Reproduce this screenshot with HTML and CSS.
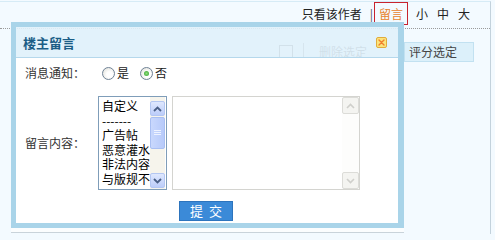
FILE: index.html
```html
<!DOCTYPE html>
<html>
<head>
<meta charset="utf-8">
<link rel="stylesheet" href="styles.css">
</head>
<body>
<div class="page">
  <div class="topbar">
    <span class="link">只看该作者</span>
    <span class="sep">|</span>
    <span class="msg">留言</span>
    <span class="size s1">小</span>
    <span class="size">中</span>
    <span class="size">大</span>
  </div>
  <div class="tools">
    <span class="ghost-check"></span>
    <span class="ghost-sep"></span>
    <span class="ghost-text">删除选定</span>
    <span class="rate">评分选定</span>
  </div>

  <div class="dialog-wrap">
    <div class="dialog">
      <div class="dlg-head">
        <span class="dlg-title">楼主留言</span>
        <svg class="dlg-close" width="11" height="11" viewBox="0 0 11 11">
          <rect x="0.5" y="0.5" width="10" height="10" rx="1.5" fill="#fbe47c" stroke="#e0ac3c"/>
          <path d="M3 3 L8 8 M8 3 L3 8" stroke="#f07f2c" stroke-width="1.4" stroke-linecap="round"/>
        </svg>
      </div>
      <div class="dlg-body">
        <div class="label row1">消息通知：</div>
        <div class="radios row1">
          <span class="radio"></span><span class="rlabel">是</span>
          <span class="radio checked second"></span><span class="rlabel">否</span>
        </div>

        <div class="label row2">留言内容：</div>
        <div class="fields row2">
          <div class="listbox">
            <div class="items">
              <div>自定义</div>
              <div>-------</div>
              <div>广告帖</div>
              <div>恶意灌水</div>
              <div>非法内容</div>
              <div>与版规不符</div>
            </div>
            <div class="sb">
              <div class="sb-btn up">
                <svg width="9" height="6" viewBox="0 0 9 6"><path d="M1 5 L4.5 1.5 L8 5" fill="none" stroke="#4a5f86" stroke-width="1.8"/></svg>
              </div>
              <div class="sb-thumb">
                <svg width="7" height="6" viewBox="0 0 7 6"><path d="M0 0.5H7M0 2.5H7M0 4.5H7" stroke="#eef3ff" stroke-width="1"/></svg>
              </div>
              <div class="sb-fill"></div>
              <div class="sb-btn down">
                <svg width="9" height="6" viewBox="0 0 9 6"><path d="M1 1 L4.5 4.5 L8 1" fill="none" stroke="#4a5f86" stroke-width="1.8"/></svg>
              </div>
            </div>
          </div>
          <div class="textarea">
            <div class="tsb">
              <div class="tsb-btn">
                <svg width="9" height="6" viewBox="0 0 9 6"><path d="M1 5 L4.5 1.5 L8 5" fill="none" stroke="#cfcfcb" stroke-width="1.6"/></svg>
              </div>
              <div class="tsb-fill"></div>
              <div class="tsb-btn">
                <svg width="9" height="6" viewBox="0 0 9 6"><path d="M1 1 L4.5 4.5 L8 1" fill="none" stroke="#cfcfcb" stroke-width="1.6"/></svg>
              </div>
            </div>
          </div>
        </div>

        <div class="row3 btnrow">
          <button class="submit"><span>提</span><span>交</span></button>
        </div>
      </div>
    </div>
  </div>
</div>
</body>
</html>
```

FILE: styles.css
```css
html, body {
  margin: 0;
  padding: 0;
  background: #f3faff;
}
body {
  width: 495px;
  height: 234px;
  overflow: hidden;
  font-family: "Noto Sans CJK SC", "DejaVu Sans", sans-serif;
  font-size: 12px;
  color: #333;
}
.page {
  position: relative;
  margin-top: 1px;
  width: 491px;
  height: 233px;
  border-top: 1px solid #d6ebf6;
  border-right: 1px solid #c3d2dc;
  box-sizing: border-box;
}
.topbar {
  display: flex;
  justify-content: flex-end;
  align-items: flex-start;
  height: 26px;
  padding-right: 20px;
  border-bottom: 1px dotted #9a9a9a;
  line-height: 23px;
  color: #222;
}
.sep {
  margin-left: 8px;
  color: #555;
}
.msg {
  margin-left: 1px;
  height: 23px;
  box-sizing: border-box;
  line-height: 21px;
  padding: 0 4px;
  border: 1px solid #c8232d;
  color: #e8832c;
}
.size { margin-left: 9px; }
.size.s1 { margin-left: 8px; }

.tools {
  display: flex;
  justify-content: flex-end;
  align-items: center;
  padding-top: 13px;
  padding-right: 16px;
}
.ghost-check {
  width: 12px;
  height: 12px;
  border: 1px solid #555;
  background: #fff;
}
.ghost-sep {
  margin-left: 10px;
  width: 1px;
  height: 18px;
  background: #777;
}
.ghost-text {
  margin-left: 15px;
  color: #444;
  line-height: 20px;
}
.rate {
  margin-left: 37px;
  width: 70px;
  height: 20px;
  box-sizing: border-box;
  padding-left: 4px;
  line-height: 18px;
  background: #dcf0fa;
  border: 1px solid #c2e1f1;
  color: #444;
}

.dialog-wrap {
  position: absolute;
  left: 11px;
  top: 20px;
  width: 393px;
  padding-bottom: 4px;
  background: linear-gradient(to top, #fbfdfe 5px, transparent 5px);
  border-bottom: 1px solid #c9d3da;
}
.dialog {
  border-style: solid;
  border-color: #a9d4e9;
  border-width: 5px 6px 5px 5px;
}
.dlg-head {
  display: flex;
  justify-content: space-between;
  align-items: center;
  height: 30px;
  padding: 0 11px 0 7px;
  background: rgba(224, 241, 251, 0.9);
  border-bottom: 1px solid #b5d8ec;
}
.dlg-title {
  font-size: 13px;
  font-weight: bold;
  color: #1b5d86;
  line-height: 30px;
  margin-top: 1px;
}
.dlg-close { display: block; }

.dlg-body {
  background: #fff;
  display: grid;
  grid-template-columns: 73px 1fr;
  grid-template-rows: auto auto auto;
  padding: 6px 0 2px 9px;
  color: #222;
}
.label {
  line-height: 18px;
  color: #333;
}
.row2.label { align-self: center; }
.row1 { grid-row: 1; height: 18px; }
.row2 { grid-row: 2; margin-top: 14px; }
.btnrow { grid-row: 3; grid-column: 2; margin-top: 11px; }

.radios {
  display: flex;
  align-items: center;
}
.radio {
  position: relative;
  width: 13px;
  height: 13px;
  box-sizing: border-box;
  border-radius: 50%;
  border: 1px solid #6f8296;
  background: radial-gradient(circle at 60% 60%, #ffffff 30%, #dcdcd4 100%);
  margin-left: 4px;
}
.radio.second { margin-left: 11px; }
.radio.checked::after {
  content: "";
  position: absolute;
  left: 3px;
  top: 3px;
  width: 5px;
  height: 5px;
  border-radius: 50%;
  background: radial-gradient(circle, #8fe07a 0%, #2f9c2f 100%);
}
.rlabel {
  margin-left: 2px;
  line-height: 18px;
}

.fields {
  display: flex;
  align-items: flex-start;
  height: 94px;
}
.listbox {
  position: relative;
  width: 69px;
  height: 94px;
  box-sizing: border-box;
  border: 1px solid #7f9db9;
  background: #fff;
  overflow: hidden;
}
.items {
  width: 49px;
  overflow: hidden;
  white-space: nowrap;
  padding: 2px 0 0 3px;
  line-height: 14.6px;
  color: #000;
}
.sb {
  position: absolute;
  right: 1px;
  top: 0;
  bottom: 0;
  width: 15px;
  display: flex;
  flex-direction: column;
  background: #f6f4ec;
}
.sb-btn {
  height: 13px;
  margin-top: 4px;
  border: 1px solid #b4c7f2;
  border-radius: 2px;
  background: linear-gradient(#dfe8fe, #bccdfa);
  display: flex;
  align-items: center;
  justify-content: center;
}
.sb-btn.down { margin-top: 0; margin-bottom: 1px; }
.sb-thumb {
  height: 30px;
  margin-top: 1px;
  border: 1px solid #a9bff2;
  border-radius: 2px;
  background: linear-gradient(90deg, #c9d8fd, #b7cafa);
  display: flex;
  align-items: center;
  justify-content: center;
}
.sb-thumb svg, .sb-btn svg, .tsb-btn svg { display: block; }
.sb-fill { flex: 1; }

.textarea {
  position: relative;
  margin-left: 5px;
  width: 188px;
  height: 94px;
  box-sizing: border-box;
  border: 1px solid #d4d4d0;
  background: #fff;
}
.tsb {
  position: absolute;
  right: 0;
  top: 0;
  bottom: 0;
  width: 17px;
  display: flex;
  flex-direction: column;
  background: #fdfdfc;
}
.tsb-btn {
  height: 15px;
  border: 1px solid #dcdcd8;
  border-radius: 2px;
  background: #f4f4f1;
  display: flex;
  align-items: center;
  justify-content: center;
}
.tsb-fill { flex: 1; }

.submit {
  margin: 0 0 0 81px;
  width: 54px;
  height: 20px;
  padding: 0;
  box-sizing: border-box;
  border: 1px solid #2d74bd;
  background: #3b8ad8;
  color: #fff;
  font-family: "Noto Sans CJK SC", sans-serif;
  font-size: 13px;
  line-height: 18px;
  display: flex;
  justify-content: center;
  align-items: center;
  gap: 6px;
}
```
